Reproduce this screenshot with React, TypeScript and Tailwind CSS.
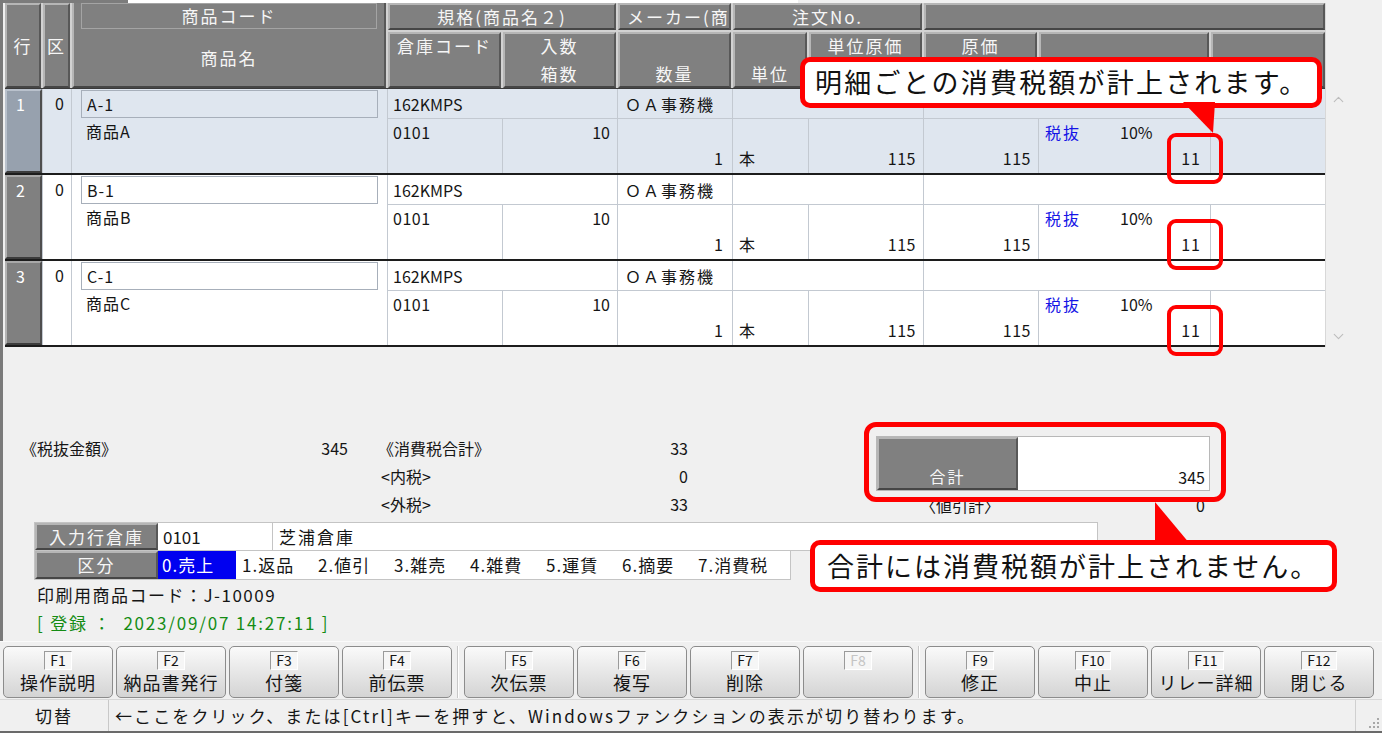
import React from 'react';
import { ChevronUp, ChevronDown } from 'lucide-react';

// bevelled grey cell used in the grid header and for the field labels
const bevel =
  'bg-[#808080] text-[#f6f6f6] border-2 border-t-[#b6b6b6] border-l-[#b6b6b6] border-b-[#464646] border-r-[#585858]';

const headCols =
  'grid-cols-[36px_27px_314px_113px_113px_113px_74px_113px_113px_170px_114px]';
const rowCols =
  'grid-cols-[37px_28px_315px_114px_114px_114px_75px_114px_114px_171px_114px]';

const lines = [
  { no: '1', code: 'A-1', name: '商品A', selected: true },
  { no: '2', code: 'B-1', name: '商品B', selected: false },
  { no: '3', code: 'C-1', name: '商品C', selected: false },
];

const kinds = ['1.返品', '2.値引', '3.雑売', '4.雑費', '5.運賃', '6.摘要', '7.消費税'];

const fkeys = [
  [
    { k: 'F1', label: '操作説明' },
    { k: 'F2', label: '納品書発行' },
    { k: 'F3', label: '付箋' },
    { k: 'F4', label: '前伝票' },
  ],
  [
    { k: 'F5', label: '次伝票' },
    { k: 'F6', label: '複写' },
    { k: 'F7', label: '削除' },
    { k: 'F8', label: '', disabled: true },
  ],
  [
    { k: 'F9', label: '修正' },
    { k: 'F10', label: '中止' },
    { k: 'F11', label: 'リレー詳細' },
    { k: 'F12', label: '閉じる' },
  ],
];

function GridHeader() {
  return (
    <div
      className={`grid ${headCols} grid-rows-[27px_56px] gap-[2px] bg-[#d2d2d2] text-[17px] tracking-[2px] leading-[22px]`}
    >
      <div className={`${bevel} row-span-2 flex items-center justify-center`}>行</div>
      <div className={`${bevel} row-span-2 flex items-center justify-center`}>区</div>
      <div className={`${bevel} row-span-2 flex flex-col px-[7px] border-t-0`}>
        <div className="h-[26px] border border-[#a4a4a4] flex items-center justify-center">
          商品コード
        </div>
        <div className="flex-1 flex items-center justify-center">商品名</div>
      </div>
      <div className={`${bevel} col-span-2 flex items-center justify-center`}>
        規格(商品名２)
      </div>
      <div className={`${bevel} flex items-center pl-[7px] overflow-hidden whitespace-nowrap`}>
        メーカー(商
      </div>
      <div className={`${bevel} col-span-2 flex items-center justify-center`}>注文No.</div>
      <div className={`${bevel} col-span-3`} />

      <div className={`${bevel} flex justify-center pt-[1px]`}>倉庫コード</div>
      <div className={`${bevel} flex flex-col items-center justify-between pt-[1px] pb-[1px]`}>
        <span>入数</span>
        <span>箱数</span>
      </div>
      <div className={`${bevel} flex items-end justify-center pb-[1px]`}>数量</div>
      <div className={`${bevel} flex items-end justify-center pb-[1px]`}>単位</div>
      <div className={`${bevel} flex justify-center pt-[1px]`}>単位原価</div>
      <div className={`${bevel} flex justify-center pt-[1px]`}>原価</div>
      <div className={bevel} />
      <div className={`${bevel} flex items-end justify-center pb-[4px]`}>備考</div>
    </div>
  );
}

function DetailLine({ line }: { line: (typeof lines)[number] }) {
  const bg = line.selected ? 'bg-[#dfe6ef]' : 'bg-white';
  const numCell = line.selected
    ? 'bg-[#97a1ae] border-t-[#b9c1cc] border-l-[#b9c1cc]'
    : 'bg-[#808080] border-t-[#a8a8a8] border-l-[#b4b4b4]';
  return (
    <div
      className={`grid ${rowCols} grid-rows-[29px_54px] gap-[1px] bg-[#c3c9d1] border-b-2 border-[#1c1c1c] text-[16px] leading-[20px] text-[#151515]`}
    >
      <div
        className={`row-span-2 ${numCell} border-2 border-b-[#3c3c3c] border-r-[#4e4e4e] text-white pl-[9px] pt-[3px]`}
      >
        {line.no}
      </div>
      <div className={`row-span-2 ${bg} text-right pr-[7px] pt-[4px]`}>0</div>
      <div className={`row-span-2 ${bg} px-[9px]`}>
        <div className="h-[28px] mt-[1px] border border-[#a7afba] pl-[5px] flex items-center tracking-[1px]">
          {line.code}
        </div>
        <div className="pl-[5px] pt-[3px] tracking-[1px]">{line.name}</div>
      </div>
      <div className={`col-span-2 ${bg} pl-[5px] flex items-center`}>162KMPS</div>
      <div className={`${bg} pl-[7px] flex items-center tracking-[2px]`}>ＯＡ事務機</div>
      <div className={`col-span-2 ${bg}`} />
      <div className={`col-span-3 ${bg}`} />

      <div className={`${bg} pl-[5px] pt-[3px] tracking-[0.5px]`}>0101</div>
      <div className={`${bg} text-right pr-[7px] pt-[3px]`}>10</div>
      <div className={`${bg} flex items-end justify-end pr-[9px] pb-[5px]`}>1</div>
      <div className={`${bg} flex items-end pl-[6px] pb-[5px]`}>本</div>
      <div className={`${bg} flex items-end justify-end pr-[7px] pb-[5px] tracking-[0.5px]`}>115</div>
      <div className={`${bg} flex items-end justify-end pr-[7px] pb-[5px] tracking-[0.5px]`}>115</div>
      <div className={`${bg} flex flex-col justify-between pt-[3px] pb-[5px]`}>
        <div className="flex">
          <span className="w-[81px] pl-[6px] text-[#1414e6] tracking-[2px]">税抜</span>
          <span>10%</span>
        </div>
        <div className="text-right pr-[9px] tracking-[1px]">11</div>
      </div>
      <div className={bg} />
    </div>
  );
}

function Summary() {
  return (
    <div className="flex pl-[18px] pt-[87px] text-[16px] text-[#151515] leading-[28px]">
      <div className="w-[327px] flex justify-between">
        <span>《税抜金額》</span>
        <span>345</span>
      </div>
      <div className="w-[30px]" />
      <div className="w-[310px] flex flex-col">
        <div className="flex justify-between">
          <span>《消費税合計》</span>
          <span>33</span>
        </div>
        <div className="flex justify-between">
          <span className="pl-[3px]">&lt;内税&gt;</span>
          <span>0</span>
        </div>
        <div className="flex justify-between">
          <span className="pl-[3px]">&lt;外税&gt;</span>
          <span>33</span>
        </div>
      </div>
      <div className="w-[188px]" />
      <div className="w-[334px] flex flex-col">
        <div className="mt-[2px] h-[55px] flex border border-[#b8b8b8]">
          <div className={`${bevel} w-[141px] flex items-end justify-center pb-[1px] tracking-[2px] leading-[22px]`}>
            合計
          </div>
          <div className="flex-1 bg-white flex items-end justify-end pr-[4px] pb-[2px] leading-[22px]">
            345
          </div>
        </div>
        <div className="flex justify-between pl-[44px] pr-[5px]">
          <span>〈値引計〉</span>
          <span>0</span>
        </div>
      </div>
    </div>
  );
}

function EntryFields() {
  return (
    <div className="flex flex-col pl-[31px] mt-[3px] text-[17px] leading-[22px] text-[#151515]">
      <div className="flex h-[29px] w-[1064px] border border-[#c4c4c4] bg-white">
        <div className={`${bevel} w-[123px] flex items-center justify-center tracking-[2px] text-[#e9e9e9]`}>
          入力行倉庫
        </div>
        <div className="w-[115px] flex items-center pl-[5px] border-r border-[#c4c4c4]">0101</div>
        <div className="flex-1 flex items-center pl-[6px] tracking-[2px]">芝浦倉庫</div>
      </div>
      <div className="flex h-[29px] w-[757px] border border-[#c4c4c4] border-t-0 bg-white">
        <div className={`${bevel} w-[123px] flex items-center justify-center tracking-[2px] text-[#e9e9e9]`}>
          区分
        </div>
        <div className="w-[78px] bg-[#0000f0] text-white flex items-center pl-[4px] tracking-[1px]">
          0.売上
        </div>
        <div className="flex-1 flex items-center pl-[6px] tracking-[1px]">
          {kinds.map((k) => (
            <span key={k} className="w-[76px] shrink-0 whitespace-nowrap">
              {k}
            </span>
          ))}
        </div>
      </div>
      <div className="h-[28px] flex items-center pl-[3px] mt-[1px] tracking-[1.5px]">
        印刷用商品コード：J-10009
      </div>
      <div className="h-[28px] flex items-center pl-[3px] text-[#148c14] whitespace-pre tracking-[1.8px]">
        {'[ 登録 ：  2023/09/07 14:27:11 ]'}
      </div>
    </div>
  );
}

function FnKey({ k, label, disabled }: { k: string; label: string; disabled?: boolean }) {
  return (
    <div className="w-[110px] h-[52px] rounded-[5px] border border-[#8c8c8c] bg-gradient-to-b from-[#fafafa] to-[#d4d4d4] flex flex-col items-center pt-[4px]">
      <div
        className={`h-[19px] px-[5px] border border-t-[#9a9a9a] border-l-[#9a9a9a] border-b-[#ffffff] border-r-[#ffffff] bg-[#f6f6f6] text-[14px] leading-[17px] ${
          disabled ? 'text-[#c4c4c4]' : 'text-[#151515]'
        }`}
      >
        {k}
      </div>
      <div className="text-[18px] leading-[24px] tracking-[1px] text-[#151515]">{label}</div>
    </div>
  );
}

function FnBar() {
  return (
    <div className="h-[58px] flex items-start pt-[4px] pl-[3px] border-t border-[#fafafa]">
      {fkeys.map((group, gi) => (
        <React.Fragment key={'grp' + gi}>
          {gi > 0 && (
            <div className="w-[12px] h-[52px] flex justify-center">
              <div className="w-[2px] h-full bg-[#c8c8c8] border-r border-white" />
            </div>
          )}
          <div className="flex gap-[3px]">
            {group.map((f) => (
              <FnKey key={f.k} k={f.k} label={f.label} disabled={f.disabled} />
            ))}
          </div>
        </React.Fragment>
      ))}
    </div>
  );
}

function StatusBar() {
  return (
    <div className="h-[34px] flex border-t border-[#d8d8d8] border-b-2 border-b-[#6a6a6a] text-[17px] text-[#151515]">
      <div className="w-[109px] flex items-center justify-center border-r border-[#c8c8c8] tracking-[2px]">
        切替
      </div>
      <div className="flex-1 flex items-center pl-[6px] tracking-[2.1px] whitespace-nowrap">
        ←ここをクリック、または[Ctrl]キーを押すと、Windowsファンクションの表示が切り替わります。
      </div>
      <div className="w-[27px] border-l border-[#d0d0d0] flex items-end justify-end pr-[3px] pb-[3px]">
        <svg width="10" height="10" viewBox="0 0 10 10">
          {[
            [8, 0], [8, 4], [4, 4], [8, 8], [4, 8], [0, 8],
          ].map(([x, y]) => (
            <rect key={`${x}-${y}`} x={x} y={y} width="2" height="2" fill="#a8a8a8" />
          ))}
        </svg>
      </div>
    </div>
  );
}

export default function App() {
  return (
    <div className="relative w-[1382px] h-[733px] overflow-hidden bg-[#f0f0f0] font-['Noto_Sans_CJK_JP','Noto_Sans',sans-serif]">
      <div className="h-[641px] border-l-[3px] border-[#7a7a7a] flex flex-col">
        <div className="h-[3px] flex">
          <div className="w-[125px] bg-[#7c7c7c]" />
          <div className="w-[670px] bg-white" />
        </div>
        <div className="flex">
          <div className="pl-[2px] w-[1322px] flex flex-col">
            <GridHeader />
            <div className="h-[1px] bg-[#3a3a3a]" />
            {lines.map((line) => (
              <DetailLine key={'line' + line.no} line={line} />
            ))}
          </div>
          <div className="flex-1 border-l border-[#d8d8d8] flex flex-col items-start justify-between pl-[4px] pt-[88px] pb-[2px] text-[#bdbdbd]">
            <ChevronUp size={17} strokeWidth={1.6} />
            <ChevronDown size={17} strokeWidth={1.6} />
          </div>
        </div>
        <Summary />
        <EntryFields />
      </div>
      <FnBar />
      <StatusBar />

      {/* callout: per-line tax */}
      <div className="absolute left-[800px] top-[57px] w-[522px] h-[51px] rounded-[10px] border-[5px] border-[#ff0000] bg-white flex items-center pl-[10px] text-[27px] tracking-[2.2px] text-[#111]">
        明細ごとの消費税額が計上されます。
      </div>
      <svg className="absolute left-[1180px] top-[102px]" width="40" height="34" viewBox="0 0 40 34">
        <polygon points="3,0 35,0 33,31" fill="#ff0000" />
      </svg>
      {['top-[133px]', 'top-[219px]', 'top-[305px]'].map((t) => (
        <div
          key={t}
          className={`absolute left-[1167px] ${t} w-[56px] h-[51px] rounded-[9px] border-[4px] border-[#ff0000]`}
        />
      ))}

      {/* callout: total excludes tax */}
      <div className="absolute left-[864px] top-[422px] w-[362px] h-[80px] rounded-[12px] border-[5px] border-[#ff0000]" />
      <svg className="absolute left-[1152px] top-[500px]" width="42" height="44" viewBox="0 0 42 44">
        <polygon points="3,2 3,44 38,44" fill="#ff0000" />
      </svg>
      <div className="absolute left-[810px] top-[540px] w-[527px] h-[52px] rounded-[10px] border-[5px] border-[#ff0000] bg-white flex items-center pl-[12px] text-[27px] tracking-[2px] text-[#111]">
        合計には消費税額が計上されません。
      </div>
    </div>
  );
}
